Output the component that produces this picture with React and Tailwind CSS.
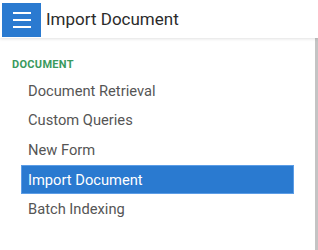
const ITEMS = ['Document Retrieval', 'Custom Queries', 'New Form', 'Import Document', 'Batch Indexing']

export default function App() {
  const active = 'Import Document'

  return (
    <div className="w-[318px] h-[250px] bg-white overflow-hidden flex flex-col" style={{ fontFamily: 'Roboto, "Liberation Sans", sans-serif' }}>
      {/* Top bar */}
      <div className="h-[38px] flex items-start pl-[2px] pt-[3px] shadow-[0_1px_3px_rgba(0,0,0,0.12)] relative z-10">
        <button className="w-[39px] h-[34px] bg-[#2a7ad0] flex flex-col items-center justify-center gap-[5px]">
          <span className="block w-[18px] h-[2px] bg-white" />
          <span className="block w-[18px] h-[2px] bg-white" />
          <span className="block w-[18px] h-[2px] bg-white" />
        </button>
        <span className="ml-[5px] mt-[5px] text-[17px] leading-[22px] text-[#2b2b2b]">Import Document</span>
      </div>

      {/* Sidebar */}
      <div className="flex-1 flex">
        <div className="flex-1 pt-[20px] pl-[12px] pr-[21px]">
          <div className="text-[11px] font-bold tracking-[0.3px] text-[#3a9a5e] leading-[14px]">DOCUMENT</div>
          <div className="mt-[4px] pl-[9px] flex flex-col">
            {ITEMS.map(item => (
              <div
                key={item}
                className={
                  item === active
                    ? 'h-[29.6px] flex items-center pl-[6px] text-[14.7px] text-white bg-[#2a7ad0] border border-[#5c9de6]'
                    : 'h-[29.6px] flex items-center pl-[7px] text-[14.7px] text-[#555]'
                }
              >
                {item}
              </div>
            ))}
          </div>
        </div>
        <div className="w-[3px] bg-[#c4c4c4]" />
      </div>
    </div>
  )
}
